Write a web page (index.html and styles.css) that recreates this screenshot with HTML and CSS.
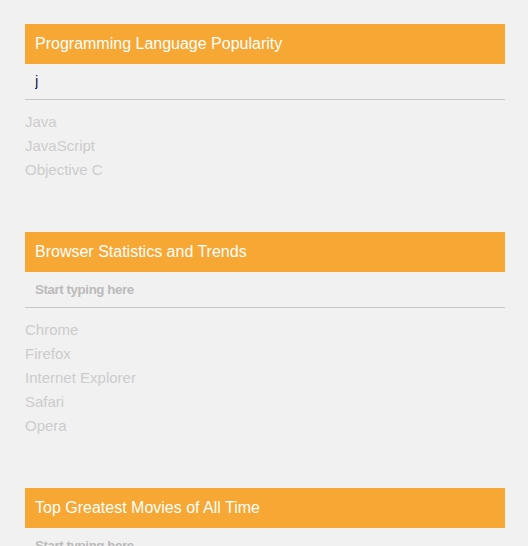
FILE: index.html
```html
<!DOCTYPE html>
<html>

<head>
    <meta charset="UTF-8">
    <title>Live Search</title>
    <link rel="stylesheet" href="styles.css">
</head>

<body>

<div class="search-box">
    <h2 class="search-title">Programming Language Popularity</h2>
    <input type="text" class="search-input" placeholder="Start typing here" value="j">
    <ul class="search-list">
        <li>Java</li>
        <li>JavaScript</li>
        <li>Objective C</li>
    </ul>
</div>

<div class="search-box">
    <h2 class="search-title">Browser Statistics and Trends</h2>
    <input type="text" class="search-input" placeholder="Start typing here">
    <ul class="search-list">
        <li>Chrome</li>
        <li>Firefox</li>
        <li>Internet Explorer</li>
        <li>Safari</li>
        <li>Opera</li>
    </ul>
</div>

<div class="search-box">
    <h2 class="search-title">Top Greatest Movies of All Time</h2>
    <input type="text" class="search-input" placeholder="Start typing here">
    <ul class="search-list">
        <li>The Godfather</li>
        <li>Citizen Kane</li>
        <li>Casablanca</li>
    </ul>
</div>

</body>

</html>
```

FILE: styles.css
```css
* {
    margin: 0;
    padding: 0;
    box-sizing: border-box;
}
body {
    padding: 24px 25px;
    background: #f1f1f1;
    font-family: "Liberation Sans", Arial, sans-serif;
}
.search-box {
    width: 480px;
    margin-bottom: 50px;
}
.search-title {
    height: 40px;
    padding: 0 10px;
    font-size: 16px;
    font-weight: normal;
    line-height: 40px;
    color: #fff;
    background: #f7a733;
}
.search-input {
    display: block;
    width: 100%;
    height: 36px;
    padding: 0 10px 2px;
    border: none;
    border-bottom: 1px solid #c8c8c8;
    outline: none;
    background: transparent;
    font-family: "Liberation Sans", Arial, sans-serif;
    font-size: 15px;
    color: #1c1c50;
}
.search-input::placeholder {
    font-size: 13.3px;
    font-weight: bold;
    letter-spacing: -0.4px;
    color: #bbb;
}
.search-list {
    list-style: none;
    padding-top: 10px;
}
.search-list li {
    font-size: 15px;
    line-height: 24px;
    color: #ccc;
}
```
